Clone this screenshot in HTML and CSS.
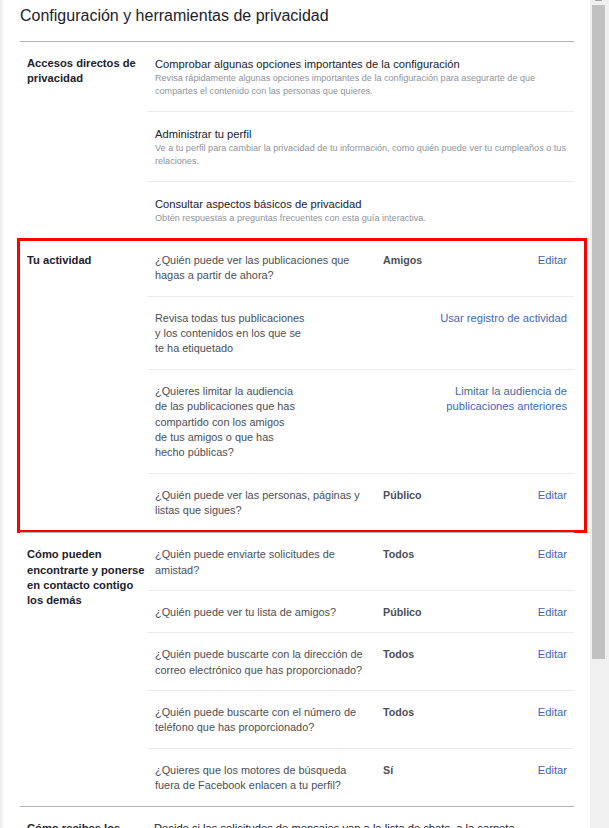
FILE: index.html
```html
<!DOCTYPE html>
<html lang="es">
<head>
    <meta charset="UTF-8">
    <meta name="viewport" content="width=device-width, initial-scale=1.0">
    <title>Configuración y herramientas de privacidad</title>
    <link rel="stylesheet" href="styles.css">
</head>
<body>
    <div class="page">
        <h2 class="page-title">Configuración y herramientas de privacidad</h2>

        <!-- accesos directos -->
        <section class="group">
            <div class="group-label">Accesos directos de privacidad</div>
            <div class="group-rows">
                <div class="shortcut">
                    <div class="shortcut-title">Comprobar algunas opciones importantes de la configuración</div>
                    <div class="shortcut-desc">Revisa rápidamente algunas opciones importantes de la configuración para asegurarte de que compartes el contenido con las personas que quieres.</div>
                </div>
                <div class="shortcut">
                    <div class="shortcut-title">Administrar tu perfil</div>
                    <div class="shortcut-desc">Ve a tu perfil para cambiar la privacidad de tu información, como quién puede ver tu cumpleaños o tus relaciones.</div>
                </div>
                <div class="shortcut">
                    <div class="shortcut-title">Consultar aspectos básicos de privacidad</div>
                    <div class="shortcut-desc">Obtén respuestas a preguntas frecuentes con esta guía interactiva.</div>
                </div>
            </div>
        </section>

        <!-- tu actividad (marcada en rojo) -->
        <section class="group group-marked">
            <div class="group-label">Tu actividad</div>
            <div class="group-rows">
                <div class="setting">
                    <div class="setting-text">¿Quién puede ver las publicaciones que hagas a partir de ahora?</div>
                    <div class="setting-value">Amigos</div>
                    <a class="setting-link" href="#">Editar</a>
                </div>
                <div class="setting setting-wide">
                    <div class="setting-text">Revisa todas tus publicaciones y los contenidos en los que se te ha etiquetado</div>
                    <a class="setting-link" href="#">Usar registro de actividad</a>
                </div>
                <div class="setting setting-wide setting-narrow">
                    <div class="setting-text">¿Quieres limitar la audiencia de las publicaciones que has compartido con los amigos de tus amigos o que has hecho públicas?</div>
                    <a class="setting-link" href="#">Limitar la audiencia de publicaciones anteriores</a>
                </div>
                <div class="setting">
                    <div class="setting-text">¿Quién puede ver las personas, páginas y listas que sigues?</div>
                    <div class="setting-value">Público</div>
                    <a class="setting-link" href="#">Editar</a>
                </div>
            </div>
            <div class="mark"></div>
        </section>

        <!-- contacto -->
        <section class="group">
            <div class="group-label">Cómo pueden encontrarte y ponerse en contacto contigo los demás</div>
            <div class="group-rows">
                <div class="setting">
                    <div class="setting-text">¿Quién puede enviarte solicitudes de amistad?</div>
                    <div class="setting-value">Todos</div>
                    <a class="setting-link" href="#">Editar</a>
                </div>
                <div class="setting">
                    <div class="setting-text">¿Quién puede ver tu lista de amigos?</div>
                    <div class="setting-value">Público</div>
                    <a class="setting-link" href="#">Editar</a>
                </div>
                <div class="setting">
                    <div class="setting-text">¿Quién puede buscarte con la dirección de correo electrónico que has proporcionado?</div>
                    <div class="setting-value">Todos</div>
                    <a class="setting-link" href="#">Editar</a>
                </div>
                <div class="setting">
                    <div class="setting-text">¿Quién puede buscarte con el número de teléfono que has proporcionado?</div>
                    <div class="setting-value">Todos</div>
                    <a class="setting-link" href="#">Editar</a>
                </div>
                <div class="setting">
                    <div class="setting-text">¿Quieres que los motores de búsqueda fuera de Facebook enlacen a tu perfil?</div>
                    <div class="setting-value">Sí</div>
                    <a class="setting-link" href="#">Editar</a>
                </div>
            </div>
        </section>

        <!-- mensajes -->
        <section class="group">
            <div class="group-label">Cómo recibes los mensajes</div>
            <div class="group-rows">
                <div class="message-row">Decide si las solicitudes de mensajes van a la lista de chats, a la carpeta de solicitudes de mensajes o no se reciben.</div>
            </div>
        </section>
    </div>

    <div class="scrollbar">
        <div class="scrollbar-arrow"></div>
        <div class="scrollbar-thumb"></div>
    </div>
</body>
</html>
```

FILE: styles.css
```css
* {
    margin: 0;
    padding: 0;
    box-sizing: border-box;
}
html, body {
    height: 100%;
    overflow: hidden;
}
body {
    font-family: "Liberation Sans", Arial, sans-serif;
    font-size: 11.2px;
    color: #1d2129;
    background: linear-gradient(to right, #ececec, #fff 5px);
}
a {
    text-decoration: none;
}

.page {
    width: 589px;
    padding: 0 15px 0 20px;
}
.page-title {
    font-size: 16px;
    font-weight: normal;
    line-height: 20px;
    padding: 6px 0 15px;
    color: #1d2129;
    border-bottom: 1px solid #b3b3b3;
}

.group {
    display: flex;
    position: relative;
    border-top: 1px solid #b3b3b3;
}
.group:first-of-type {
    border-top: none;
}
.group-marked {
    padding-bottom: 2px;
}
.group-label {
    width: 127px;
    flex-shrink: 0;
    padding: 14px 0 0 7px;
    font-weight: bold;
    line-height: 15.36px;
}
.group-rows {
    flex: 1;
}

/* accesos directos */
.shortcut {
    padding: 14px 7px 13px 8px;
    border-top: 1px solid #e9ebee;
}
.shortcut:first-child {
    border-top: none;
}
.shortcut-title {
    font-size: 11.2px;
    line-height: 16px;
    color: #1d2129;
}
.shortcut-desc {
    font-size: 9.1px;
    line-height: 13px;
    color: #90949c;
}

/* filas de configuracion */
.setting {
    display: grid;
    grid-template-columns: 212px 1fr auto;
    column-gap: 16px;
    padding: 14px 7px 12px 8px;
    border-top: 1px solid #e9ebee;
    line-height: 15.36px;
}
.setting:first-child {
    border-top: none;
}
.setting-wide {
    grid-template-columns: 150px 1fr;
}
.setting-narrow {
    grid-template-columns: 142px 1fr;
}
.setting-text {
    font-size: 10.9px;
    color: #4b4f56;
}
.setting-value {
    font-size: 10.7px;
    font-weight: bold;
    color: #4b4f56;
}
.setting-link {
    color: #4267b2;
    text-align: right;
}
.setting-narrow .setting-link {
    justify-self: end;
    max-width: 125px;
}

.message-row {
    max-width: 376px;
    padding: 14px 0 12px 7px;
    line-height: 15.36px;
    color: #1d2129;
}

/* recuadro rojo */
.mark {
    position: absolute;
    top: -1px;
    left: -3px;
    right: -13px;
    bottom: -1px;
    border: 3px solid #ff0000;
    pointer-events: none;
}

/* barra de desplazamiento */
.scrollbar {
    position: fixed;
    top: 0;
    right: 0;
    width: 19px;
    height: 100%;
    background-color: #f0f0f0;
}
.scrollbar-arrow {
    position: absolute;
    top: 0;
    left: 5px;
    width: 7px;
    height: 1px;
    background-color: #a3a3a3;
}
.scrollbar-thumb {
    position: absolute;
    top: 5px;
    left: 2px;
    width: 13px;
    height: 654px;
    background-color: #c1c1c1;
}
```
